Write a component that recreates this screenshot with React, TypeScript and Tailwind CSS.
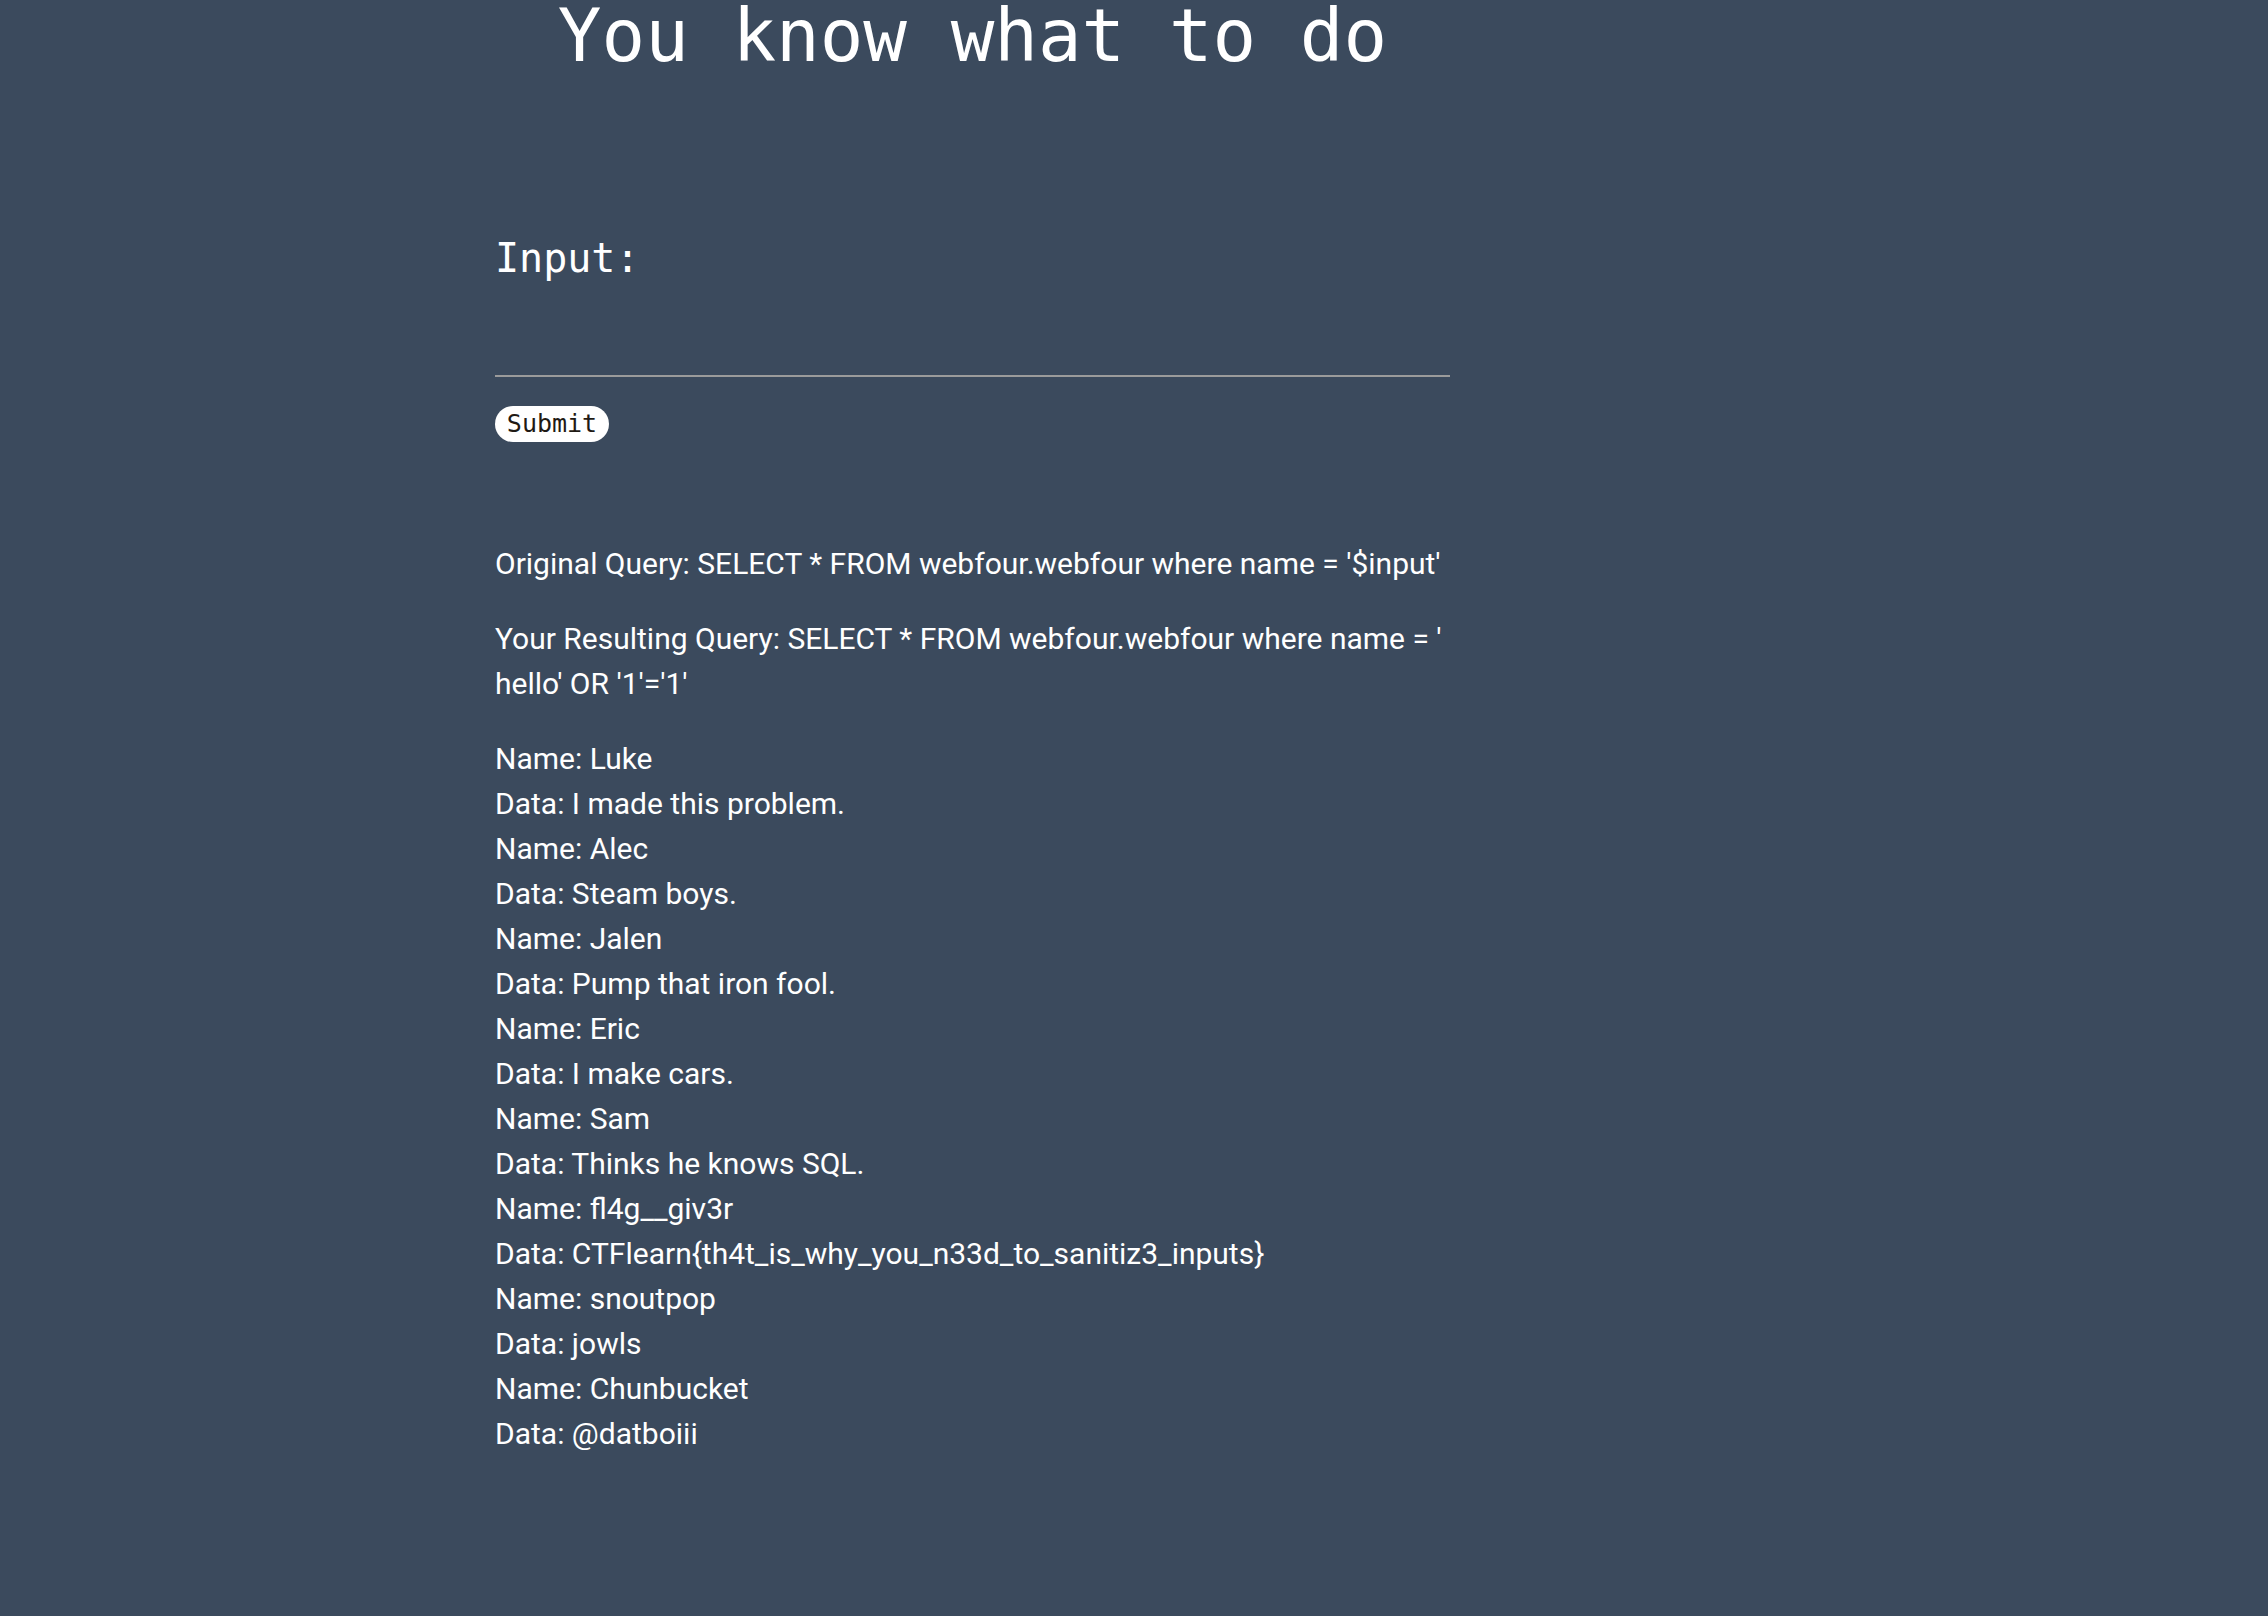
export default function App() {
  const rows: [string, string][] = [
    ["Luke", "I made this problem."],
    ["Alec", "Steam boys."],
    ["Jalen", "Pump that iron fool."],
    ["Eric", "I make cars."],
    ["Sam", "Thinks he knows SQL."],
    ["fl4g__giv3r", "CTFlearn{th4t_is_why_you_n33d_to_sanitiz3_inputs}"],
    ["snoutpop", "jowls"],
    ["Chunbucket", "@datboiii"],
  ];

  return (
    <div className="min-h-[1616px] w-full overflow-hidden bg-[#3b4a5d] text-white">
      <div className="ml-[495px] w-[955px]">
        <h1
          className="text-center text-[72.5px] leading-[72px] font-normal"
          style={{ fontFamily: '"DejaVu Sans Mono", monospace' }}
        >
          You know what to do
        </h1>

        <form className="mt-[166px]" onSubmit={(e) => e.preventDefault()}>
          <label
            className="block text-[40px] leading-[40px]"
            style={{ fontFamily: '"DejaVu Sans Mono", monospace' }}
          >
            Input:
          </label>
          <input
            type="text"
            className="mt-[40px] block h-[59px] w-full border-b-2 border-[#9b9b9b] bg-transparent text-[30px] text-white outline-none"
            style={{ fontFamily: '"DejaVu Sans Mono", monospace' }}
          />
          <button
            type="submit"
            className="mt-[29px] block h-[36px] w-[114px] rounded-full bg-white text-center text-[25px] leading-[36px] text-[#1f1a14]"
            style={{ fontFamily: '"DejaVu Sans Mono", monospace' }}
          >
            Submit
          </button>
        </form>

        <div
          className="mt-[99px] text-[30px] leading-[45px]"
          style={{ fontFamily: 'Roboto, "Noto Sans", sans-serif' }}
        >
          <p className="mb-[30px]">
            Original Query: SELECT * FROM webfour.webfour where name = '$input'
          </p>
          <p className="mb-[30px]">
            Your Resulting Query: SELECT * FROM webfour.webfour where name = ' hello' OR '1'='1'
          </p>
          <div>
            {rows.map(([name, data]) => (
              <div key={name}>
                <div>Name: {name}</div>
                <div>Data: {data}</div>
              </div>
            ))}
          </div>
        </div>
      </div>
    </div>
  );
}
